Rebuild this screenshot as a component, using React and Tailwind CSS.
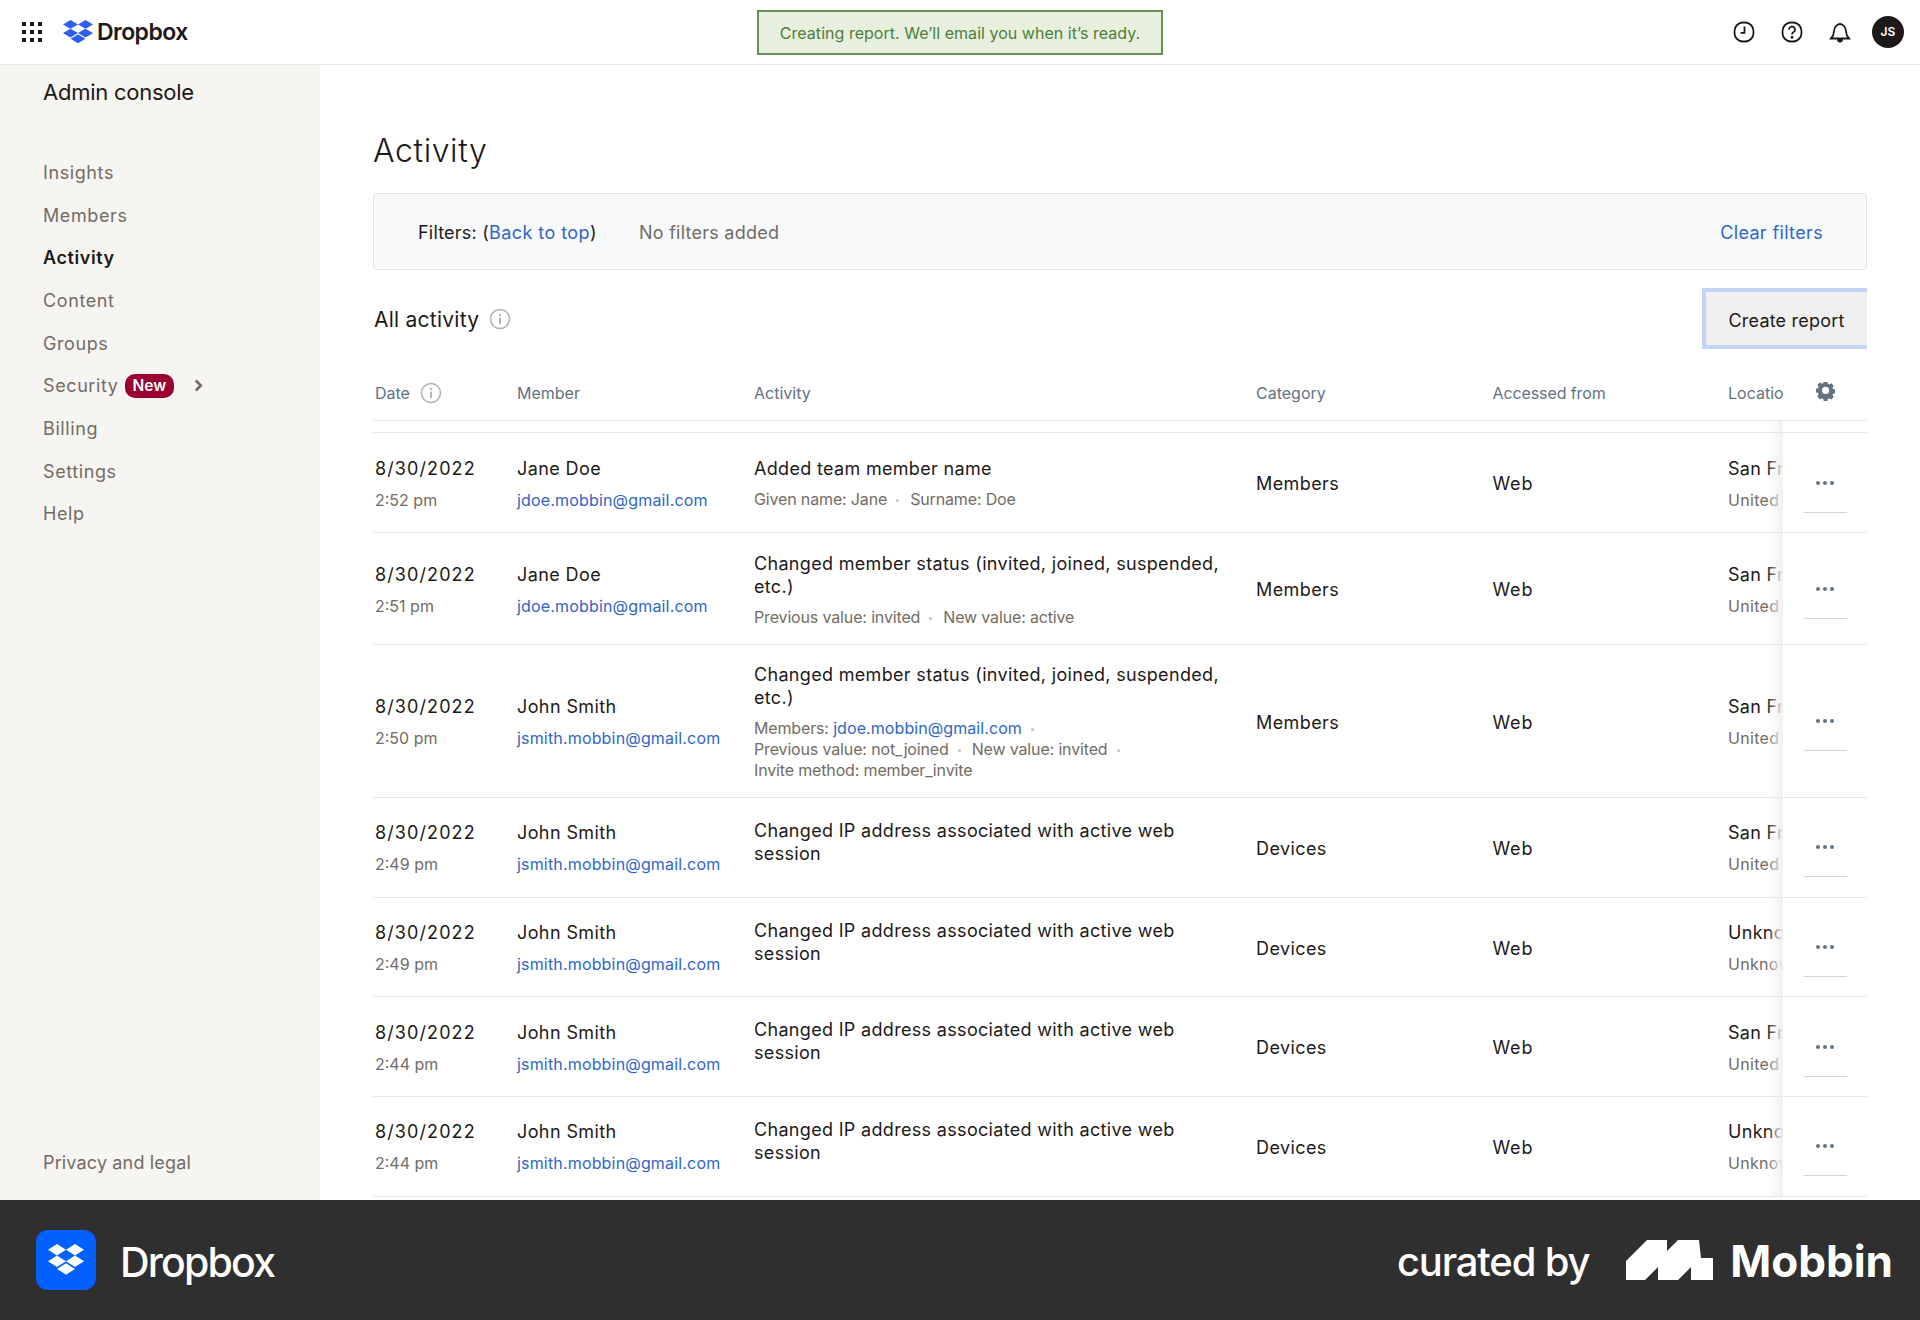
import React from "react";

function DropboxGlyph({ className, fill }) {
  return (
    <svg viewBox="0 0 36 33" preserveAspectRatio="none" className={className} fill={fill}>
      <path d="M9 0 0 5.800l9 5.700 9-5.700zM27 0l-9 5.800 9 5.700 9-5.700zM0 17.200 9 23l9-5.800-9-5.700zM27 11.500l-9 5.700 9 5.800 9-5.800zM9 24.900l9 5.800 9-5.800-9-5.700z" />
    </svg>
  );
}

function InfoIcon({ className }) {
  return (
    <svg viewBox="0 0 22 22" className={className} fill="none">
      <circle cx="11" cy="11" r="9.500" stroke="#b5b5b5" strokeWidth="1.600" />
      <circle cx="11" cy="7" r="1.200" fill="#b5b5b5" />
      <rect x="10" y="9.600" width="2" height="6.400" fill="#b5b5b5" />
    </svg>
  );
}

function Dot({ l = "ml-[9px]", r = "mr-[11px]" }) {
  return <span className={`inline-block w-[3px] h-[3px] rounded-full bg-[#c4c4c4] align-middle ${l} ${r}`} />;
}

const rows = [
  { h: "h-[100px]", t: "2:52 pm", n: "Jane Doe", e: "jdoe.mobbin@gmail.com", a: "Added team member name", s: <>Given name: Jane<Dot />Surname: Doe</>, c: "Members", l1: "San Francisco", l2: "United States" },
  { h: "h-[112px]", t: "2:51 pm", n: "Jane Doe", e: "jdoe.mobbin@gmail.com", a: "Changed member status (invited, joined, suspended, etc.)", s: <>Previous value: invited<Dot />New value: active</>, c: "Members", l1: "San Francisco", l2: "United States" },
  { h: "h-[153px]", t: "2:50 pm", n: "John Smith", e: "jsmith.mobbin@gmail.com", a: "Changed member status (invited, joined, suspended, etc.)", s: <span className="block leading-[21px]">Members: <span className="text-[#2f66c8] tracking-[0.080px]">jdoe.mobbin@gmail.com</span><Dot /><br />Previous value: not_joined<Dot />New value: invited<Dot /><br />Invite method: member_invite</span>, c: "Members", l1: "San Francisco", l2: "United States" },
  { h: "h-[99.700px]", t: "2:49 pm", n: "John Smith", e: "jsmith.mobbin@gmail.com", a: "Changed IP address associated with active web session", c: "Devices", l1: "San Francisco", l2: "United States" },
  { h: "h-[99.700px]", t: "2:49 pm", n: "John Smith", e: "jsmith.mobbin@gmail.com", a: "Changed IP address associated with active web session", c: "Devices", l1: "Unknown", l2: "Unknown" },
  { h: "h-[99.700px]", t: "2:44 pm", n: "John Smith", e: "jsmith.mobbin@gmail.com", a: "Changed IP address associated with active web session", c: "Devices", l1: "San Francisco", l2: "United States" },
  { h: "h-[99.700px]", t: "2:44 pm", n: "John Smith", e: "jsmith.mobbin@gmail.com", a: "Changed IP address associated with active web session", c: "Devices", l1: "Unknown", l2: "Unknown" },
];

function StickyShade() {
  return <div className="absolute left-[-16px] top-0 bottom-0 w-[16px] bg-gradient-to-r from-transparent to-[#f1f1f1]" />;
}

function Row({ r }) {
  return (
    <div className={`${r.h} pt-[2px] flex items-center border-b border-[#e6e6e6] relative`}>
      <div className="w-[144px] pl-[2px] shrink-0">
        <div className="text-[18px] leading-[24px] tracking-[1.100px] text-[#1e1919]">8/30/2022</div>
        <div className="mt-[8px] text-[16px] leading-[22px] text-[#736c64]">{r.t}</div>
      </div>
      <div className="w-[237px] shrink-0">
        <div className="text-[18px] leading-[24px] tracking-[0.400px] text-[#1e1919]">{r.n}</div>
        <div className="mt-[8px] text-[16px] leading-[22px] tracking-[0.170px] text-[#2f66c8]">{r.e}</div>
      </div>
      <div className={`w-[502px] shrink-0 pr-[20px] ${r.s ? "" : "pb-[13px]"}`}>
        <div className="text-[18px] leading-[23px] tracking-[0.320px] text-[#1e1919]">{r.a}</div>
        {r.s && <div className="mt-[9px] text-[16px] leading-[21px] tracking-[-0.150px] text-[#736c64]">{r.s}</div>}
      </div>
      <div className="w-[236.500px] shrink-0 text-[18px] tracking-[0.400px] text-[#1e1919]">{r.c}</div>
      <div className="w-[235.500px] shrink-0 text-[18px] tracking-[0.800px] text-[#1e1919]">Web</div>
      <div className="flex-1 min-w-0 overflow-hidden whitespace-nowrap">
        <div className="text-[18px] leading-[24px] tracking-[0.300px] text-[#1e1919]">{r.l1}</div>
        <div className="mt-[8px] text-[16px] leading-[22px] tracking-[0.300px] text-[#736c64]">{r.l2}</div>
      </div>
      <div className="absolute right-0 top-0 bottom-0 w-[84px] bg-white flex items-center justify-center">
        <StickyShade />
        <div className="absolute left-0 bottom-[-1px] w-[2px] h-px bg-white" />
        <div className="w-[43px] h-full relative flex items-center justify-center">
          <svg viewBox="0 0 18 4" className="w-[18px] h-[4px]" fill="#637282">
            <circle cx="2" cy="2" r="2" /><circle cx="9" cy="2" r="2" /><circle cx="16" cy="2" r="2" />
          </svg>
          <div className="absolute left-0 right-0 top-[calc(50%+29px)] h-px bg-[#d5d5d5]" />
        </div>
      </div>
    </div>
  );
}

export default function App() {
  return (
    <div className="w-[1920px] h-[1320px] flex flex-col overflow-hidden bg-white font-['Inter',sans-serif]">
      <header className="h-[65px] shrink-0 border-b border-[#e8e8e8] flex items-center relative bg-white">
        <div className="ml-[22px] w-[20px] h-[20px] grid grid-cols-3 gap-[3px]">
          {Array.from({ length: 9 }).map((_, i) => <span key={i} className="bg-[#1e1919] w-[4px] h-[4px] mx-auto my-auto" />)}
        </div>
        <DropboxGlyph className="ml-[21px] w-[30px] h-[25px]" fill="#2d5fef" />
        <span className="ml-[4px] text-[23px] font-semibold tracking-[-0.550px] text-[#1e1919]">Dropbox</span>
        <div className="absolute left-[757px] top-[10px] w-[406px] h-[45px] border-2 border-[#6a9156] bg-[#e7efdf] flex items-center justify-center text-[16px] tracking-[0.030px] text-[#4d7f3a]">
          Creating report. We’ll email you when it’s ready.
        </div>
        <div className="ml-auto flex items-center">
          <svg viewBox="0 0 24 24" className="w-[24px] h-[24px]" fill="none" stroke="#1e1919" strokeWidth="1.800">
            <rect x="2.500" y="2.500" width="19" height="19" rx="8.500" />
            <path d="M12.500 6.500v6.300H8.500" />
          </svg>
          <svg viewBox="0 0 24 24" className="ml-[24px] w-[24px] h-[24px]" fill="none" stroke="#1e1919" strokeWidth="1.800">
            <rect x="2.500" y="2.500" width="19" height="19" rx="8.500" />
            <path d="M9 9.500a3 3 0 1 1 4.600 2.600c-1 .6-1.600 1.200-1.600 2.400" />
            <circle cx="12" cy="17.300" r="0.600" fill="#1e1919" />
          </svg>
          <svg viewBox="0 0 24 24" className="ml-[24px] w-[24px] h-[24px]" fill="none" stroke="#1e1919" strokeWidth="1.800">
            <path d="M3 18.500h18c-2-2-2.800-3.600-3-7-.2-4-2.500-7.500-6-7.500s-5.800 3.500-6 7.500c-.2 3.400-1 5-3 7z" />
            <path d="M10 19.500a2 2 0 0 0 4 0z" fill="#1e1919" />
          </svg>
          <div className="ml-[20px] mr-[16px] w-[32px] h-[32px] rounded-full bg-[#1e1919] text-white text-[12px] font-semibold flex items-center justify-center">JS</div>
        </div>
      </header>

      <div className="flex-1 min-h-0 flex overflow-hidden">
        <aside className="w-[320px] shrink-0 bg-[#f7f5f2] flex flex-col pl-[43px]">
          <div className="mt-[12px] text-[22px] leading-[30px] tracking-[-0.250px] text-[#1e1919]">Admin console</div>
          <nav className="mt-[44px] flex flex-col text-[18px] tracking-[0.600px] text-[#736c64]">
            {["Insights", "Members", "Activity", "Content", "Groups"].map((n) => (
              <div key={n} className={`h-[42.700px] flex items-center ${n === "Activity" ? "font-semibold text-[#1e1919]" : ""}`}>{n}</div>
            ))}
            <div className="h-[42.700px] flex items-center">
              Security
              <span className="ml-[6px] h-[24px] px-[8px] rounded-[10px] bg-[#9b0032] text-white text-[15.500px] font-semibold flex items-center tracking-normal">New</span>
              <svg viewBox="0 0 10 14" className="ml-[20px] w-[9px] h-[13px]" fill="none" stroke="#736c64" strokeWidth="3"><path d="M2 1.500 7.500 7 2 12.500" /></svg>
            </div>
            {["Billing", "Settings", "Help"].map((n) => (
              <div key={n} className="h-[42.700px] flex items-center">{n}</div>
            ))}
          </nav>
          <div className="mt-auto mb-[25px] text-[18px] leading-[24px] tracking-[0.150px] text-[#736c64]">Privacy and legal</div>
        </aside>

        <main className="flex-1 min-w-0 pl-[53px] pr-[53px] overflow-hidden">
          <h1 className="mt-[66px] text-[32px] leading-[40px] tracking-[0.600px] font-[350] text-[#1e1919]">Activity</h1>
          <div className="mt-[22px] h-[77px] pt-[2px] rounded-[4px] border border-[#e2e5e8] bg-[#f7f9fa] flex items-center pl-[44px] pr-[43px] text-[18px] tracking-[0.200px]">
            <span className="w-[221px] whitespace-nowrap text-[#1e1919]">Filters: (<span className="text-[#2f66c8] tracking-[0.450px]">Back to top</span>)</span>
            <span className="text-[#736c64] tracking-[0.250px]">No filters added</span>
            <span className="ml-auto text-[#2f66c8] tracking-[0.350px]">Clear filters</span>
          </div>
          <div className="mt-[18px] h-[61px] flex items-center">
            <span className="pl-px pt-[2px] text-[21px] tracking-[0.250px] text-[#1e1919]">All activity</span>
            <InfoIcon className="ml-[10px] w-[22px] h-[22px]" />
            <button className="ml-auto w-[165px] h-[61px] pt-[3px] bg-[#f0f0f0] border-l-4 border-y-4 border-[#c3d4f7] text-[18px] tracking-[0.200px] text-[#1e1919]">Create report</button>
          </div>
          <div className="relative h-[72px] pt-[16px] border-b border-[#e6e6e6] flex items-center text-[16px] text-[#637282]">
            <div className="w-[144px] pl-[2px] shrink-0 flex items-center">Date<InfoIcon className="ml-[10px] w-[22px] h-[22px]" /></div>
            <div className="w-[237px] shrink-0">Member</div>
            <div className="w-[502px] shrink-0">Activity</div>
            <div className="w-[236.500px] shrink-0">Category</div>
            <div className="w-[235.500px] shrink-0 tracking-[-0.100px]">Accessed from</div>
            <div className="w-[55px] shrink-0 overflow-hidden whitespace-nowrap">Location</div>
            <svg viewBox="0 0 24 24" className="absolute right-[32px] top-[33px] w-[19px] h-[19px]" fill="#637282">
              <path fillRule="evenodd" d="M9.500 0h5l.7 3.200 2 .9 2.800-1.800 3.500 3.500-1.800 2.800.9 2 3.200.7v5l-3.200.7-.9 2 1.800 2.800-3.500 3.500-2.800-1.800-2 .9-.7 3.200h-5l-.7-3.200-2-.9-2.800 1.800L.5 20.700l1.800-2.800-.9-2L-1.800 15.200v-5l3.200-.7.9-2-1.800-2.800L4 1.200l2.800 1.800 2-.9zM12 7.500a5 5 0 1 0 0 10 5 5 0 0 0 0-10z" transform="translate(1.300 -0.600) scale(0.9)" />
            </svg>
          </div>
          <div className="relative h-[11px]">
            <div className="absolute right-0 top-0 bottom-0 w-[84px] bg-white"><StickyShade /></div>
          </div>
          <div className="border-t border-[#e6e6e6]">
            {rows.map((r, i) => <Row key={i} r={r} />)}
          </div>
        </main>
      </div>

      <footer className="h-[120px] shrink-0 bg-[#2f2f2f] flex items-center text-white">
        <div className="ml-[36px] w-[60px] h-[60px] rounded-[12px] bg-[#0061fe] flex items-center justify-center">
          <DropboxGlyph className="w-[36px] h-[33px]" fill="#ffffff" />
        </div>
        <span className="ml-[24px] pt-[6px] text-[41px] font-medium tracking-[-1.800px]">Dropbox</span>
        <span className="ml-auto pt-[4px] text-[40px] font-medium tracking-[-1.200px]">curated by</span>
        <svg viewBox="0 0 87 40" className="ml-[37px] w-[87px] h-[40px]" fill="#ffffff">
          <path d="M0 21 21 0H41V11L52 0H73L75 18H87V40H65V27L52 40H32V27L19 40H0Z" />
        </svg>
        <span className="ml-[17px] mr-[27px] pt-[2px] text-[44px] font-bold tracking-[0px]">Mobbin</span>
      </footer>
    </div>
  );
}
